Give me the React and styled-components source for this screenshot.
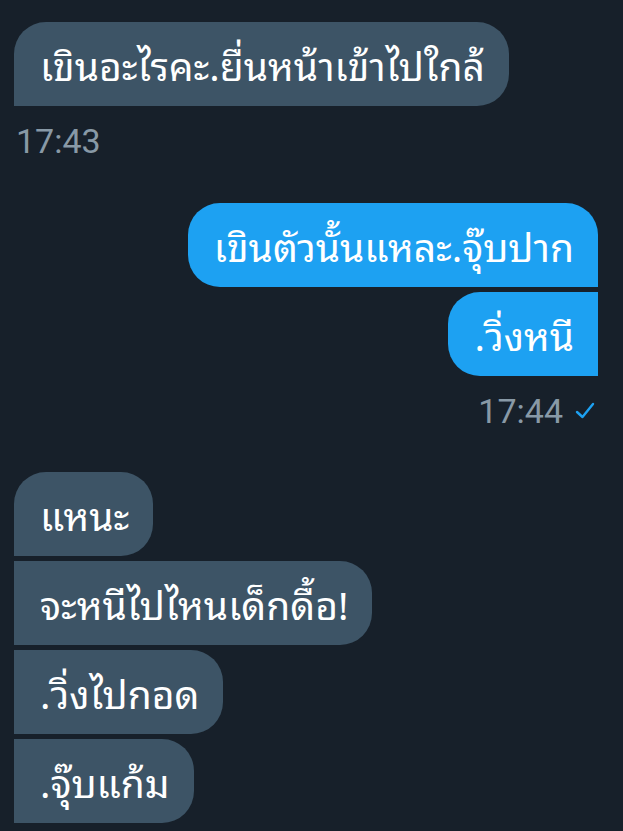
import React from 'react';
import styled, { createGlobalStyle } from 'styled-components';

const Global = createGlobalStyle`
  html, body {
    margin: 0;
    background: #17202a;
  }
  body {
    font-family: "Noto Sans Thai Looped", "Noto Sans", "Noto Sans Thai", Roboto, sans-serif;
  }
`;

const Page = styled.div`
  width: 623px;
  height: 831px;
  overflow: hidden;
  background: #17202a;
  padding: 22px 25px 0 14px;
  box-sizing: border-box;
  display: flex;
  flex-direction: column;
`;

const Group = styled.div`
  display: flex;
  flex-direction: column;
  align-items: ${p => (p.$mine ? 'flex-end' : 'flex-start')};
  gap: 5px;
  margin-bottom: ${p => p.$after || 0}px;
`;

const R = 32;

const Bubble = styled.div`
  box-sizing: border-box;
  height: 84px;
  display: flex;
  align-items: center;
  padding: 0 24px 2px 26px;
  font-size: 39px;
  color: #ffffff;
  white-space: nowrap;
  background: ${p => (p.$mine ? '#1da1f2' : '#3d5466')};
  border-radius: ${p => {
    const first = p.$pos === 'first' || p.$pos === 'single';
    if (p.$mine) {
      return `${R}px ${first ? R : 0}px 0 ${R}px`;
    }
    return `${first ? R : 0}px ${R}px ${R}px 0`;
  }};
`;

const Meta = styled.div`
  display: flex;
  align-items: center;
  gap: 12px;
  margin-top: 10px;
  font-family: Roboto, "Noto Sans", sans-serif;
  font-size: 34px;
  color: #8899a6;
  padding: ${p => (p.$mine ? '0 3px 0 0' : '0 0 0 2px')};
`;

const Check = () => (
  <svg width="20" height="18" viewBox="0 0 20 18" fill="none">
    <path d="M2 10 L7.5 15 L18 2" stroke="#1da1f2" strokeWidth="2.4" strokeLinecap="round" strokeLinejoin="round" />
  </svg>
);

const pos = (i, n) => (n === 1 ? 'single' : i === 0 ? 'first' : i === n - 1 ? 'last' : 'mid');

const groups = [
  { mine: false, texts: ['เขินอะไรคะ.ยื่นหน้าเข้าไปใกล้'], time: '17:43', after: 42 },
  { mine: true, texts: ['เขินตัวนั้นแหละ.จุ๊บปาก', '.วิ่งหนี'], time: '17:44', check: true, after: 41 },
  { mine: false, texts: ['แหนะ', 'จะหนีไปไหนเด็กดื้อ!', '.วิ่งไปกอด', '.จุ๊บแก้ม'] },
];

export default function App() {
  return (
    <Page>
      <Global />
      {groups.map((g, gi) => (
        <Group key={gi} $mine={g.mine} $after={g.after}>
          {g.texts.map((t, i) => (
            <Bubble key={i} $mine={g.mine} $pos={pos(i, g.texts.length)}>
              {t}
            </Bubble>
          ))}
          {g.time && (
            <Meta $mine={g.mine}>
              {g.time}
              {g.check && <Check />}
            </Meta>
          )}
        </Group>
      ))}
    </Page>
  );
}
